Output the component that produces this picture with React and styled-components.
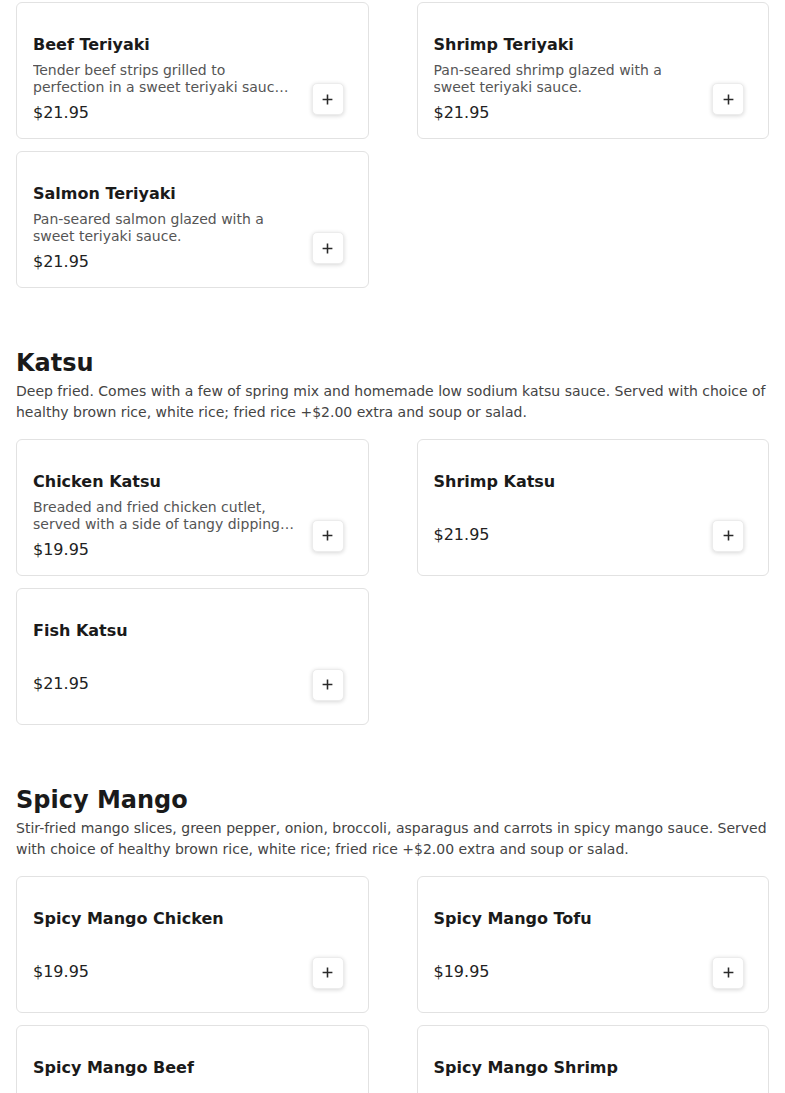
import React from 'react';
import styled, { createGlobalStyle } from 'styled-components';

const COLORS = {
  text: '#1a1a1a',
  body: '#222',
  muted: '#555',
  border: '#e2e2e2',
};

const GlobalStyle = createGlobalStyle`
  html, body {
    margin: 0;
    padding: 0;
    background: #fff;
  }
  body {
    font-family: "DejaVu Sans", "Liberation Sans", sans-serif;
    color: ${COLORS.text};
  }
  * { box-sizing: border-box; }
`;

const Page = styled.main`
  padding: 2px 16px 24px;
  display: flex;
  flex-direction: column;
  gap: 61px;
`;

const Section = styled.section`
  display: flex;
  flex-direction: column;
`;

const SectionTitle = styled.h2`
  margin: 0;
  font-size: 24px;
  line-height: 1.2;
  font-weight: 700;
  color: ${COLORS.text};
`;

const SectionDesc = styled.p`
  margin: 3px 0 16px;
  font-size: 14px;
  line-height: 21px;
  color: #444;
`;

const Grid = styled.div`
  display: grid;
  grid-template-columns: 1fr 1fr;
  column-gap: 48px;
  row-gap: 12px;
`;

const Card = styled.div`
  height: 137px;
  padding: 30px 24px 12px 16px;
  display: grid;
  grid-template-columns: minmax(0, 1fr) 32px;
  column-gap: 16px;
  background: #fff;
  border: 1px solid ${COLORS.border};
  border-radius: 6px;
`;

const Info = styled.div`
  display: flex;
  flex-direction: column;
  min-width: 0;
`;

const ItemName = styled.h3`
  margin: 0;
  font-size: 16px;
  line-height: 24px;
  font-weight: 700;
  color: ${COLORS.text};
  white-space: nowrap;
`;

const ItemDesc = styled.p`
  margin: 5px 0 0;
  min-height: 19px;
  font-size: 14px;
  line-height: 17px;
  color: ${COLORS.muted};
  display: -webkit-box;
  -webkit-line-clamp: 2;
  -webkit-box-orient: vertical;
  overflow: hidden;
`;

const Price = styled.div`
  margin-top: 5px;
  font-size: 16px;
  line-height: 24px;
  color: ${COLORS.body};
`;

const AddBtn = styled.button`
  align-self: end;
  margin-bottom: 11px;
  width: 32px;
  height: 32px;
  padding: 0;
  border: 1px solid #ececec;
  border-radius: 5px;
  background: #fff;
  box-shadow: 0 1px 4px rgba(0, 0, 0, 0.16);
  display: grid;
  place-items: center;
  cursor: pointer;

  svg {
    width: 11px;
    height: 11px;
  }
`;

const PlusIcon = () => (
  <svg viewBox="0 0 12 12" fill="none" stroke="#2a2a2a" strokeWidth="1.7" strokeLinecap="square">
    <path d="M6 1.5V10.5M1.5 6H10.5" />
  </svg>
);

const menu = [
  {
    id: 'teriyaki',
    items: [
      { name: 'Beef Teriyaki', desc: 'Tender beef strips grilled to perfection in a sweet teriyaki sauce, served with steamed vegetables.', price: '$21.95' },
      { name: 'Shrimp Teriyaki', desc: 'Pan-seared shrimp glazed with a sweet teriyaki sauce.', price: '$21.95' },
      { name: 'Salmon Teriyaki', desc: 'Pan-seared salmon glazed with a sweet teriyaki sauce.', price: '$21.95' },
    ],
  },
  {
    id: 'katsu',
    title: 'Katsu',
    desc: 'Deep fried. Comes with a few of spring mix and homemade low sodium katsu sauce. Served with choice of healthy brown rice, white rice; fried rice +$2.00 extra and soup or salad.',
    items: [
      { name: 'Chicken Katsu', desc: 'Breaded and fried chicken cutlet, served with a side of tangy dipping sauce.', price: '$19.95' },
      { name: 'Shrimp Katsu', price: '$21.95' },
      { name: 'Fish Katsu', price: '$21.95' },
    ],
  },
  {
    id: 'mango',
    title: 'Spicy Mango',
    desc: 'Stir-fried mango slices, green pepper, onion, broccoli, asparagus and carrots in spicy mango sauce. Served with choice of healthy brown rice, white rice; fried rice +$2.00 extra and soup or salad.',
    items: [
      { name: 'Spicy Mango Chicken', price: '$19.95' },
      { name: 'Spicy Mango Tofu', price: '$19.95' },
      { name: 'Spicy Mango Beef', price: '$21.95' },
      { name: 'Spicy Mango Shrimp', price: '$21.95' },
    ],
  },
];

export default function App() {
  return (
    <>
      <GlobalStyle />
      <Page>
        {menu.map(section => (
          <Section key={section.id}>
            {section.title && <SectionTitle>{section.title}</SectionTitle>}
            {section.desc && <SectionDesc>{section.desc}</SectionDesc>}
            <Grid>
              {section.items.map(item => (
                <Card key={item.name}>
                  <Info>
                    <ItemName>{item.name}</ItemName>
                    <ItemDesc>{item.desc}</ItemDesc>
                    <Price>{item.price}</Price>
                  </Info>
                  <AddBtn aria-label={`Add ${item.name}`}>
                    <PlusIcon />
                  </AddBtn>
                </Card>
              ))}
            </Grid>
          </Section>
        ))}
      </Page>
    </>
  );
}
